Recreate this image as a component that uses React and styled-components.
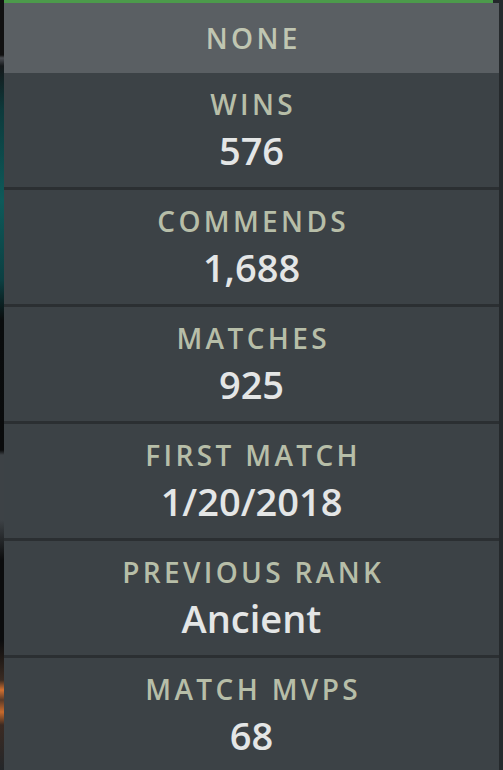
import React from 'react';
import styled, { createGlobalStyle } from 'styled-components';

const GlobalStyle = createGlobalStyle`
  html, body {
    margin: 0;
    padding: 0;
    background: #1e2022;
  }
  * {
    box-sizing: border-box;
  }
`;

const stats = [
  { label: 'WINS', value: '576' },
  { label: 'COMMENDS', value: '1,688' },
  { label: 'MATCHES', value: '925' },
  { label: 'FIRST MATCH', value: '1/20/2018' },
  { label: 'PREVIOUS RANK', value: 'Ancient' },
  { label: 'MATCH MVPS', value: '68' },
];

const Screen = styled.div`
  display: flex;
  width: 503px;
  height: 770px;
  overflow: hidden;
  font-family: 'Open Sans', 'Noto Sans', sans-serif;
`;

// sliver of the game scene peeking out on the left
const SceneEdge = styled.div`
  width: 4px;
  flex-shrink: 0;
  background: linear-gradient(
    to bottom,
    #111 0px,
    #111 55px,
    #4a4d52 58px,
    #15191b 66px,
    #0d3a3c 110px,
    #0e5a5a 200px,
    #0c3f42 280px,
    #0a0c0d 320px,
    #0a0b0c 450px,
    #3d4246 455px,
    #3d4246 520px,
    #0b0c0d 560px,
    #0b0c0d 640px,
    #3a2b22 680px,
    #d27030 690px,
    #5a3a28 700px,
    #c86a2c 712px,
    #3b2a22 725px,
    #24272a 770px
  );
`;

const Panel = styled.div`
  flex: 1;
  display: flex;
  flex-direction: column;
  overflow: hidden;
  background: #23272a;
  border-right: 4px solid #25292c;
`;

const AccentBar = styled.div`
  height: 3px;
  flex-shrink: 0;
  margin-right: 6px;
  background: #4c9a4b;
`;

const Header = styled.div`
  height: 70px;
  flex-shrink: 0;
  display: flex;
  align-items: center;
  justify-content: center;
  background: #5a5f63;
`;

const Label = styled.div`
  font-size: 28px;
  line-height: 1;
  font-weight: 600;
  letter-spacing: 0.12em;
  padding-left: 0.12em;
  color: ${(p) => (p.$muted ? '#c0c6b2' : '#b7bea8')};
`;

const StatRow = styled.div`
  height: 117px;
  flex-shrink: 0;
  display: flex;
  flex-direction: column;
  align-items: center;
  padding-top: 17px;
  gap: 13px;
  background: #3c4246;
  border-bottom: 3px solid #2b2f32;
`;

const Value = styled.div`
  font-size: 38px;
  line-height: 1;
  font-weight: 600;
  color: #e4e6e6;
`;

const App = () => (
  <>
    <GlobalStyle />
    <Screen>
      <SceneEdge />
      <Panel>
        <AccentBar />
        <Header>
          <Label $muted>NONE</Label>
        </Header>
        {stats.map((s) => (
          <StatRow key={s.label}>
            <Label>{s.label}</Label>
            <Value>{s.value}</Value>
          </StatRow>
        ))}
      </Panel>
    </Screen>
  </>
);

export default App;
